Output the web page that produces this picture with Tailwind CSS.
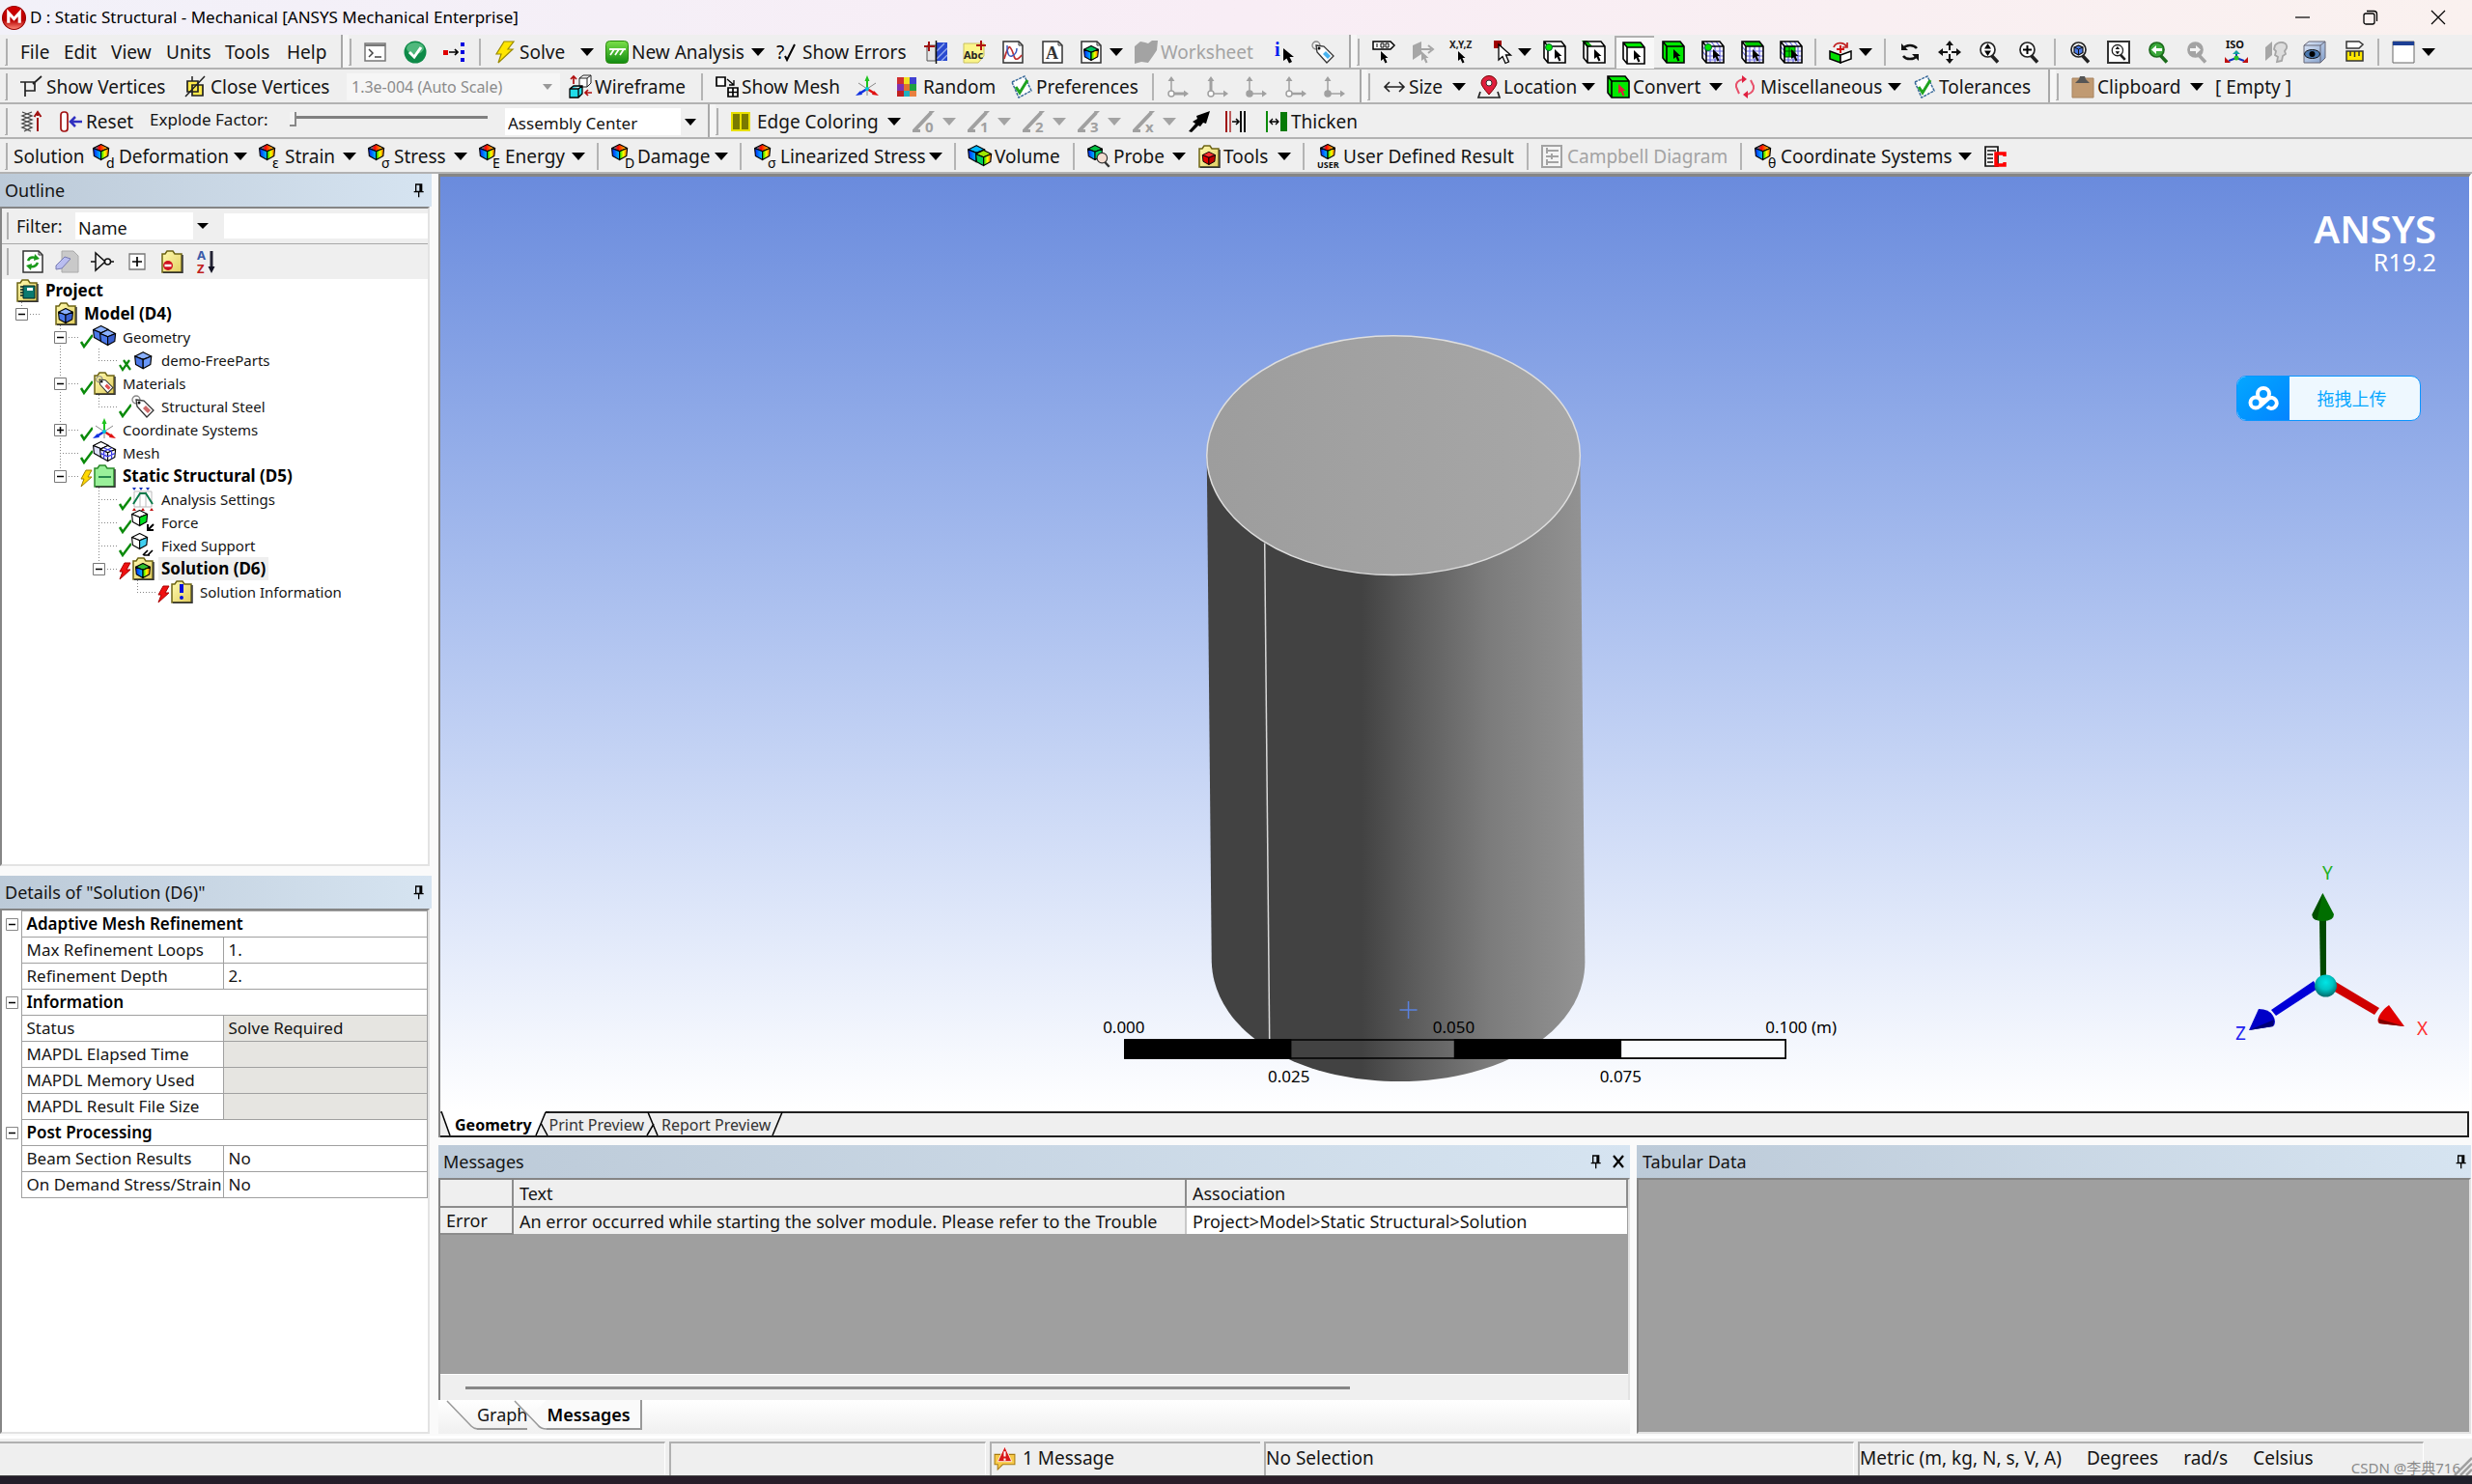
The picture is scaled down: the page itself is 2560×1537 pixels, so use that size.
<!DOCTYPE html>
<html lang="en">
<head>
  <meta charset="UTF-8" />
  <meta name="viewport" content="width=device-width, initial-scale=1.0"/>
  <title>D : Static Structural - Mechanical [ANSYS Mechanical Enterprise]</title>
  <script src="https://cdn.jsdelivr.net/npm/@tailwindcss/browser@4"></script>
</head>
<body class="h-screen flex flex-col overflow-hidden bg-[#fafafa] text-[#141414] text-[18px] leading-6 font-['Noto_Sans','Noto_Sans_CJK_SC',sans-serif]">

  <!-- shared gradients -->
  <svg class="absolute w-0 h-0" aria-hidden="true">
    <defs>
      <linearGradient id="gTop" x1="0" x2="1"><stop offset="0" stop-color="#00d0ff"/><stop offset=".4" stop-color="#f00"/><stop offset="1" stop-color="#ff0"/></linearGradient>
      <linearGradient id="gLeft" x1="0" x2="1"><stop offset="0" stop-color="#0020ff"/><stop offset="1" stop-color="#00c8ff"/></linearGradient>
      <linearGradient id="gRight" x1="0" x2="1"><stop offset="0" stop-color="#00e000"/><stop offset=".5" stop-color="#ff0"/><stop offset="1" stop-color="#ff5a00"/></linearGradient>
      <linearGradient id="gGreen" x1="0" y1="0" x2="0" y2="1"><stop offset="0" stop-color="#7be04a"/><stop offset="1" stop-color="#118a11"/></linearGradient>
      <linearGradient id="gRed" x1="0" y1="0" x2="0" y2="1"><stop offset="0" stop-color="#d40000"/><stop offset=".6" stop-color="#b80000"/><stop offset="1" stop-color="#ff8a7a"/></linearGradient>
      <linearGradient id="gFolder" x1="0" y1="0" x2="1" y2="1"><stop offset="0" stop-color="#fffbb0"/><stop offset="1" stop-color="#e2cd60"/></linearGradient>
      <linearGradient id="gTag" x1="0" y1="0" x2="1" y2="1"><stop offset="0" stop-color="#dfe9fa"/><stop offset="1" stop-color="#7f9cc8"/></linearGradient>
    </defs>
  </svg>

  <header class="h-9 shrink-0 flex items-center bg-linear-to-r from-[#f2f1f9] via-[#f8edf5] to-[#faf1ef] text-black text-[17px]">
    <svg class="w-[25px] h-[25px] ml-[2px] mr-[4px] shrink-0" viewBox="0 0 24 24"><circle cx="12" cy="12" r="11.500" fill="url(#gRed)" stroke="#900"/><path d="M6.500 17V7l5.500 6 5.500-6v10" fill="none" stroke="#fff" stroke-width="3"/></svg>
    <h1 class="grow whitespace-nowrap">D : Static Structural - Mechanical [ANSYS Mechanical Enterprise]</h1>
    <div class="flex">
      <button aria-label="Minimize" class="w-[70px] flex justify-center"><svg class="w-4 h-4" viewBox="0 0 16 16"><path d="M0 8h15" stroke="#000" stroke-width="1.200"/></svg></button>
      <button aria-label="Restore" class="w-[70px] flex justify-center"><svg class="w-4 h-4" viewBox="0 0 16 16" fill="none" stroke="#000" stroke-width="1.300"><rect x="1" y="4" width="11" height="11" rx="2"/><path d="M4 1.500h7.500q3 0 3 3V12"/></svg></button>
      <button aria-label="Close" class="w-[70px] flex justify-center"><svg class="w-4 h-4" viewBox="0 0 16 16"><path d="M1 1l14 14M15 1L1 15" stroke="#000" stroke-width="1.200"/></svg></button>
    </div>
  </header>

  <div id="toolbars" class="shrink-0 bg-[#efefef] text-[19px]"></div>

  <main class="grow min-h-0 flex gap-[7px] pr-px">
    <!-- left column -->
    <div class="w-[447px] shrink-0 flex flex-col">
      <section class="grow min-h-0 flex flex-col">
        <div class="h-[34px] shrink-0 px-[5px] flex items-center justify-between bg-linear-to-r from-[#bccad8] to-[#d6e4f1]">
          <h2>Outline</h2><span data-icon="pin"></span>
        </div>
        <div class="grow min-h-0 flex flex-col mr-[2px] border-2 border-[#858585] border-r-[#e3e3e3] border-b-[#e3e3e3] bg-white">
          <div class="h-[37px] shrink-0 flex items-center bg-[#efefef] border-b border-[#a8a8a8]">
            <span class="ml-[5px] w-[2px] h-7 shrink-0 border-r-2 border-[#b0b0b0]"></span>
            <label for="filterBy" class="ml-2 w-[61px] shrink-0">Filter:</label>
            <div class="relative w-[142px] shrink-0">
              <select id="filterBy" class="appearance-none w-full h-7 pl-[3px] pt-1 leading-6 bg-white"><option>Name</option></select>
              <span class="absolute right-0 top-0 w-5 h-7 bg-[#efefef] flex items-center justify-center pointer-events-none"><svg class="w-3 h-[6px]" viewBox="0 0 12 6"><path d="M0 0h12L6 6z"/></svg></span>
            </div>
            <input aria-label="Filter text" class="ml-3 grow min-w-0 h-[26px] bg-white" />
          </div>
          <div id="outlineTools" class="h-[36px] shrink-0 flex items-center bg-[#efefef]"></div>
          <ul id="tree" class="text-[15px]"></ul>
        </div>
      </section>

      <section class="h-[580px] shrink-0 flex flex-col mt-[10px] pb-[2px]">
        <div class="h-[34px] shrink-0 px-[5px] flex items-center justify-between bg-linear-to-r from-[#bccad8] to-[#d6e4f1]">
          <h2>Details of "Solution (D6)"</h2><span data-icon="pin"></span>
        </div>
        <div class="grow mr-[2px] border-2 border-[#858585] border-r-[#e3e3e3] border-b-[#e3e3e3] bg-white text-[17px]">
          <table class="w-full border-collapse table-fixed">
            <colgroup><col class="w-[20px]"/><col class="w-[209px]"/><col/></colgroup>
            <tbody id="details"></tbody>
          </table>
        </div>
      </section>
    </div>

    <!-- right column -->
    <div class="grow min-w-0 flex flex-col">
      <section class="grow min-h-0 flex flex-col border-2 border-t-3 border-[#858585] border-r-white border-b-0">
        <div class="relative grow min-h-0 bg-linear-to-b from-[#6a8bdd] to-white">
          <svg id="scene" class="w-full h-full" viewBox="0 0 2100 969" font-size="17">
            <defs>
              <linearGradient id="side" x1="0" x2="1"><stop offset="0" stop-color="#424242"/><stop offset=".41" stop-color="#424242"/><stop offset=".55" stop-color="#5c5c5c"/><stop offset=".75" stop-color="#7c7c7c"/><stop offset="1" stop-color="#939393"/></linearGradient>
              <linearGradient id="cap" x1="0" x2="1"><stop offset="0" stop-color="#9d9d9d"/><stop offset="1" stop-color="#a7a7a7"/></linearGradient>
              <radialGradient id="ball" cx=".5" cy=".35" r=".65"><stop offset="0" stop-color="#00e6e6"/><stop offset=".5" stop-color="#00c4c4"/><stop offset="1" stop-color="#006c6c"/></radialGradient>
            </defs>
            <!-- cylinder -->
            <path d="M793 292L798 814C800 886 885 938 992 938S1185 886 1185 814L1180 288z" fill="url(#side)"/>
            <ellipse cx="986.500" cy="289" rx="193.500" ry="124" fill="url(#cap)" stroke="#dedede" stroke-width="1.500"/>
            <path d="M853 380l5 515" stroke="#d8d8d8" stroke-width="1.500"/>
            <path d="M1002 855v18M993 864h18" stroke="#5a82e0" stroke-width="1.500"/>
            <!-- ruler -->
            <g stroke="#000" stroke-width="1.500">
              <path d="M708 895h685v19H708z" fill="none"/>
              <path d="M708 895h172v19H708zM1050 895h172v19h-172z"/>
              <path d="M1222 895h171v19h-171z" fill="#fff" fill-opacity=".5"/>
            </g>
            <g text-anchor="middle">
              <text x="707" y="888">0.000</text><text x="1049" y="888">0.050</text><text x="1409" y="888">0.100 (m)</text>
              <text x="878" y="939">0.025</text><text x="1222" y="939">0.075</text>
            </g>
          </svg>

          <div class="absolute right-[34px] top-[32px] text-right text-white">
            <p class="text-[40px] leading-[44px] font-semibold">ANSYS</p>
            <p class="text-[25px] leading-[24px]">R19.2</p>
          </div>

          <button class="absolute right-[50px] top-[206px] w-[191px] h-[47px] flex items-center rounded-[10px] overflow-hidden border border-[#0a95ff] bg-[#eef8ff] text-[#06a7ff]">
            <span class="w-[54px] h-full flex items-center justify-center bg-linear-to-br from-[#06a7ff] to-[#0684ff]">
              <svg class="w-8 h-7" viewBox="0 0 32 28" fill="none" stroke="#fff" stroke-width="4"><circle cx="8" cy="18" r="5.500"/><circle cx="16" cy="9" r="6"/><path d="M12 22l9-8a5.500 5.500 0 1 1 -1 8"/></svg>
            </span>
            <span class="grow text-center pr-[6px]">拖拽上传</span>
          </button>

          <svg class="absolute right-[27px] bottom-[52px] w-[230px] h-[210px]" viewBox="2300 890 230 210" font-size="19" stroke-width="1">
            <text x="2405" y="912" fill="#22b022">Y</text><text x="2315" y="1078" fill="#2222f0">Z</text><text x="2503" y="1073" fill="#ff3030">X</text>
            <path d="M2402 954h7v62h-6z" fill="#004a00"/><path d="M2405.500 926l11.500 22q0 7-11.500 7t-11-7z" fill="#006e00"/><path d="M2405.500 926l-11 22q0 5 5 6z" fill="#005000"/>
            <path d="M2419 1018l45 27-5 7-43-25z" fill="#cf0000"/><path d="M2474 1042l16 22-26-3q-3-2 0-8t10-11z" fill="#e00000"/><path d="M2490 1064l-26-3-1-5z" fill="#800000"/>
            <path d="M2396 1017l-44 30 5 6 43-28z" fill="#0000d8"/><path d="M2339 1046l-10 22 25-4q4-4 0-11t-15-7z" fill="#0000c8"/><path d="M2329 1068l25-4 1-7z" fill="#000078"/>
            <circle cx="2408.500" cy="1022" r="11.500" fill="url(#ball)"/>
          </svg>
        </div>

        <div class="h-[27px] shrink-0 flex items-stretch bg-[#efefef] border-y-2 border-r-2 border-[#202020] text-[16px] leading-5">
          <svg class="w-[12px] -mt-[2px] h-[25px] shrink-0" viewBox="0 0 12 25"><path d="M0 0h12v25h-2z" fill="#fff"/><path d="M1 0l9 25" stroke="#000" stroke-width="1.500"/></svg>
          <button class="-mt-[2px] h-[25px] pt-[2px] pl-[3px] pr-px bg-white text-black font-bold text-[16px]">Geometry</button>
          <svg class="w-[17px] -mt-[2px] h-[25px] shrink-0" viewBox="0 0 17 25"><path d="M0 0h13L4 25H0z" fill="#fff"/><path d="M13 1L3 25M8 12l7 13M13 1h4" stroke="#000" stroke-width="1.500" fill="none"/></svg>
          <button class="text-[#333]">Print Preview</button>
          <svg class="w-[18px] -mt-[2px] h-[25px] shrink-0" viewBox="0 0 18 25"><path d="M4 1l10 24M10 13L3 25" stroke="#000" stroke-width="1.500"/></svg>
          <button class="text-[#333]">Report Preview</button>
          <svg class="w-[14px] -mt-[2px] h-[25px] shrink-0" viewBox="0 0 14 25"><path d="M12 1L2 25" stroke="#000" stroke-width="1.500"/></svg>
        </div>
      </section>

      <div class="h-[301px] shrink-0 mt-2 pb-[2px] grid grid-cols-[1234fr_864fr] gap-[7px]">
        <section class="min-w-0 flex flex-col">
          <div class="h-[34px] shrink-0 px-[5px] flex items-center bg-linear-to-r from-[#bccad8] to-[#d6e4f1]">
            <h2 class="grow">Messages</h2><span data-icon="pin"></span>
            <button aria-label="Close messages" class="ml-2"><svg class="w-[14px] h-[14px]" viewBox="0 0 14 14"><path d="M2 1l10 12M12 1L2 13" stroke="#000" stroke-width="2.200"/></svg></button>
          </div>
          <div class="grow flex flex-col border-t-2 border-l-2 border-[#858585] border-r-2 border-r-[#e3e3e3] bg-[#9f9f9f]">
            <table class="w-full table-fixed border-collapse text-left">
              <colgroup><col class="w-[75px]"/><col class="w-[697px]"/><col/></colgroup>
              <thead class="bg-[#efefef]">
                <tr class="h-7">
                  <th aria-label="Type" class="border-r-2 border-b-2 border-[#8c8c8c]"></th>
                  <th class="border-r-2 border-b-2 border-[#8c8c8c] pl-[6px] font-normal">Text</th>
                  <th class="border-r-2 border-b-2 border-[#8c8c8c] pl-[6px] font-normal">Association</th>
                </tr>
              </thead>
              <tbody>
                <tr class="h-7 bg-[#efefef]">
                  <td class="border-r-2 border-b-2 border-[#8c8c8c] pl-[6px]">Error</td>
                  <td class="border-r-2 border-[#c8c8c8] pl-[6px] whitespace-nowrap">An error occurred while starting the solver module. Please refer to the Trouble</td>
                  <td class="bg-white pl-[6px] whitespace-nowrap">Project&gt;Model&gt;Static Structural&gt;Solution</td>
                </tr>
              </tbody>
            </table>
            <div class="mt-auto h-[27px] bg-[#efefef] border-t border-white flex items-center"><span class="ml-[26px] w-[74.5%] h-[3px] bg-[#868686]"></span></div>
          </div>
          <div class="h-[35px] shrink-0 pl-2 flex bg-linear-to-b from-white to-[#f0f0f0]">
            <svg class="w-[32px] h-[31px]" viewBox="0 0 32 31"><path d="M1 1l25 26q3 3 8 3" fill="none" stroke="#999" stroke-width="1.500"/></svg>
            <button class="h-[31px] border-b-2 border-[#999]">Graph</button>
            <svg class="w-[34px] -ml-[14px] h-[31px]" viewBox="0 0 34 31"><path d="M16 17l9 9q3 4 9 4V0z" fill="#fafafa"/><path d="M1 1l24 25q3 4 9 4" fill="none" stroke="#999" stroke-width="1.500"/></svg>
            <button class="h-[31px] pr-[10px] border-b-2 border-r-2 border-[#999] bg-[#fafafa] text-black font-semibold">Messages</button>
          </div>
        </section>
        <section class="min-w-0 flex flex-col">
          <div class="h-[34px] shrink-0 pl-[6px] pr-[2px] flex items-center justify-between bg-linear-to-r from-[#bccad8] to-[#d6e4f1]">
            <h2>Tabular Data</h2><span data-icon="pin"></span>
          </div>
          <div class="grow border-2 border-[#858585] border-r-[#e3e3e3] border-b-[#e3e3e3] bg-[#9f9f9f]"></div>
        </section>
      </div>
    </div>
  </main>

  <footer class="relative h-[41px] shrink-0 pt-[3px] flex gap-1 bg-[#efefef] border-t-3 border-white text-[19px]">
    <div class="w-[689px] border-t-2 border-r border-t-[#b0b0b0] border-r-white"></div>
    <div class="w-[328px] border-t-2 border-l-2 border-r border-[#b0b0b0] border-r-white"></div>
    <div class="w-[280px] pl-px pb-1 flex items-center gap-[6px] border-t-2 border-l-2 border-[#b0b0b0]"><span data-icon="alert"></span>1 Message</div>
    <div class="grow pb-1 flex items-center border-t-2 border-l-2 border-r border-[#b0b0b0] border-r-white">No Selection</div>
    <div class="w-[586px] pb-1 flex items-center gap-[26px] border-t-2 border-l-2 border-r border-[#b0b0b0] border-r-white"><span>Metric (m, kg, N, s, V, A)</span><span>Degrees</span><span>rad/s</span><span>Celsius</span></div>
    <div class="w-[46px]"></div>
    <span class="absolute right-[12px] bottom-0 text-[15px] leading-4 text-[#8a8a8a]">CSDN @李典716</span>
    <svg class="absolute right-0 bottom-0 w-5 h-5" viewBox="0 0 20 20"><path d="M2 20L20 2M8 20L20 8M14 20l6-6" stroke="#a0a0a0" stroke-width="2.500"/></svg>
  </footer>
  <div class="h-[9px] shrink-0 bg-linear-to-r from-[#231d29] via-[#2b1d28] to-[#1f1f2a] border-t border-[#444]"></div>

  <script>
    // ---- icon building blocks (24 x 24) ----
    const cursor = (f = '#000') => `<path d="M12 9v10l2.500-2 2 4.500 2-1-2-4.500h3z" fill="${f}"/>`;
    const box = (f, extra = '') => `<path d="M1 1h18l4 5v17H5l-4-5z" fill="${f}"/>${extra}<path d="M1 1h18l4 5v17H5l-4-5zM1 1l4 5h18M5 6v17" fill="none" stroke="#000" stroke-width="1.600"/>`;
    const grid = '<path d="M9 6v17M14 6v17M19 6v17M5 11h18M5 16h18M5 20h18M1 6l4 5M1 11l4 5M5 1l4 5M10 1l4 5M15 1l4 5" stroke="#6a6ae0" stroke-width="1.200"/>';
    const iso = (t, l, r) => `<g stroke="#000" stroke-width="1.400" stroke-linejoin="round"><path d="M2 7l10-5 10 5-10 4z" fill="${t}"/><path d="M2 7l10 4v11L3 17z" fill="${l}"/><path d="M22 7l-10 4v11l9-5z" fill="${r}"/></g>`;
    const rainbow = iso('url(#gTop)', 'url(#gLeft)', 'url(#gRight)');
    const result = (s) => `<g transform="translate(-1 -2) scale(.8)">${rainbow}</g><text x="14" y="24" font-size="14" fill="#000">${s}</text>`;
    const page = '<path d="M2 1h16l4 4v18H2z" fill="#fff" stroke="#333" stroke-width="1.500"/><path d="M18 1v4h4" fill="none" stroke="#333"/>';
    const folder = (f = 'url(#gFolder)', s = '#6d6414') => `<path d="M2 23V4h3l2-3h6l2 3h7v19z" fill="${f}" stroke="${s}" stroke-width="1.500"/><path d="M3 23.200h20V5" fill="none" stroke="#333" stroke-width="1.500"/>`;
    const lens = (inner, ring = '#222', fill = '#fff') => `<path d="M14 15l7 7.500" stroke="${ring}" stroke-width="3.500"/><circle cx="10.500" cy="9.500" r="7.500" fill="${fill}" stroke="${ring}" stroke-width="1.700"/>${inner}`;
    const triad = (a, b, dot) => `<g stroke="#a0a0a0" fill="#a0a0a0"><path d="M5 19V4" stroke-width="${a}"/><path d="M5 19h15" stroke-width="${b}"/><path d="M1.500 6L5 1l3.500 5zM18 15.500l5 3.500-5 3.500z" stroke="none"/><circle cx="5" cy="19" r="3" fill="${dot}" stroke-width="1.500"/></g>`;
    const edge = (n) => `<path d="M2 21L19 3" stroke="#a0a0a0" stroke-width="4"/><path d="M17 1h6l-4 4zM0 20h8v3H0z" fill="#a0a0a0"/><text x="13" y="23" font-size="15" font-weight="700" fill="#a0a0a0">${n}</text>`;
    const tag = (f) => `<circle cx="5" cy="5" r="4" fill="none" stroke="#888" stroke-width="1.300"/><path d="M5 5l8 1 10 10-7 7L6 12z" fill="#fff" stroke="#333" stroke-width="1.300"/><path d="M12 14l3-3 5 5-3 3z" fill="${f}"/><circle cx="8" cy="8" r="1.500"/>`;
    const card = '<path d="M2 7l13-6 7 15-13 7z" fill="#fff" stroke="#3a6a9a" stroke-width="1.500" stroke-dasharray="3 1"/><path d="M6 12l4 6 8-13" fill="none" stroke="#1fa31f" stroke-width="3"/>';
    const axes = '<path d="M12 14V4" stroke="#1fc41f" stroke-width="2"/><path d="M9.500 6L12 0l2.500 6z" fill="#1fc41f"/><path d="M12 14l-8 5" stroke="#1030e0" stroke-width="2.500"/><path d="M0 21l5-5 2 4z" fill="#1030e0"/><path d="M12 14l8 5" stroke="#e01010" stroke-width="2.500"/><path d="M24 21l-5-5-2 4z" fill="#e01010"/><path d="M12 14v7M3 8l9 6 9-6" stroke="#888" fill="none"/><circle cx="12" cy="14" r="2" fill="#00c8d8"/>';
    const bolt = (f, s) => `<path d="M11 1h10l-6 8h5L5 23l3-9H3z" fill="${f}" stroke="${s}" stroke-width="1.200"/>`;

    const icons = {
      pin: '<path d="M7 3h9v11H7zM4 14.500h15M11.500 15v8" fill="none" stroke="#000" stroke-width="2"/><path d="M14 3v11" stroke="#000" stroke-width="3"/>',
      alert: '<path d="M2 9h20v10H10l-5 5v-5H2z" fill="#f7c948" stroke="#a87b10"/><path d="M12 1l7 15H5z" fill="#d81818" stroke="#fff" stroke-width=".8"/><path d="M12 6v5M12 13v2" stroke="#fff" stroke-width="2"/>',
      console: '<rect x="1" y="3" width="21" height="18" fill="#fff" stroke="#777" stroke-width="1.500"/><path d="M1 5h21" stroke="#777" stroke-width="2"/><path d="M5 9l4 4-4 4M11 17h7" fill="none" stroke="#444" stroke-width="1.500"/>',
      ok: '<circle cx="12" cy="12" r="11.500" fill="#0e8a48"/><ellipse cx="12" cy="8" rx="9" ry="6" fill="#4fb87c"/><path d="M6 12l5 5 7-10" fill="none" stroke="#fff" stroke-width="3"/>',
      dots: '<path d="M0 10h5v5H0z" fill="#e00000"/><path d="M6 12h9M12 9l3 3-3 3" fill="none" stroke="#000" stroke-width="1.700"/><path d="M18 2h4v4h-4zM18 10h4v4h-4zM18 18h4v4h-4z" fill="#0000e0"/>',
      solve: bolt('#ffe600', '#9a8a00'),
      analysis: '<rect x=".5" y=".5" width="23" height="23" rx="4" fill="url(#gGreen)" stroke="#2a8a10"/><path d="M4 9h17" stroke="#fff" stroke-width="2"/><path d="M9 9l-4 6M14 9l-4 6M19 9l-4 6" stroke="#fff" stroke-width="1.700"/>',
      errors: '<text x="0" y="19" font-size="19" fill="#000">?</text><path d="M9 16l2 4L19 4" fill="none" stroke="#000" stroke-width="2"/>',
      section: '<path d="M12 2h12v19H12z" fill="#2a4ad0"/><path d="M13 11l8-8M13 19L24 8M18 21l6-6" stroke="#9ab0f0" stroke-width="1.300"/><path d="M3 5h9v16H3z" fill="#e4e4e4" stroke="#555"/><path d="M12.500 0v24" stroke="#111" stroke-width="1.500"/><path d="M5 1v10M0 6h11" stroke="#a01010" stroke-width="2"/>',
      abc: '<path d="M1 3h21v13l-6 7H1z" fill="#fbf58a" stroke="#c8c060"/><text x="1" y="19" font-size="11" font-weight="700" fill="#222">Abc</text><path d="M19 0v10M14 5h10" stroke="#b01010" stroke-width="2"/>',
      chart: page + '<path d="M3 19q4-14 6-12t4 9 8-1" fill="none" stroke="#c03030" stroke-width="1.700"/><path d="M6 5q0 13 5 11t5-8" fill="none" stroke="#3a5ac0" stroke-width="1.500"/>',
      letter: page + '<text x="5" y="19" font-size="18" font-weight="700" font-family="Liberation Serif" fill="#333">A</text>',
      pic: page + `<g transform="translate(3 4) scale(.75)">${iso('#00c060', 'url(#gLeft)', 'url(#gRight)')}</g>`,
      sheet: '<path d="M0 6l6-5 5 1 3 1 4-3h6l-1 10-4 6-5 7-7-1-7 2z" fill="#a3a3a3"/>',
      info: '<text x="2" y="16" font-size="20" font-weight="700" font-family="Liberation Serif" fill="#0020f0">i</text><path d="M11 8v13l3.500-2.500 2.500 5 3-1.500-2.500-5h4.500z"/>',
      tag: tag('#4ab4f0'),
      steel: tag('#d06a6a'),
      label100: '<path d="M1 1h18l4 4-4 4H1z" fill="#fff" stroke="#000" stroke-width="1.500"/><path d="M5 3v4M9 3h3v4H9zM14 3h3v4h-3z" fill="none" stroke="#000"/><g transform="translate(-3 2)">' + cursor() + '</g>',
      flip: '<path d="M2 5l9-4v13l-9 6z" fill="#a6a6a6"/><path d="M4 9h17M18 5l5 4-5 4" stroke="#a6a6a6" stroke-width="2" fill="none"/><g transform="translate(-1 2)">' + cursor('#a6a6a6') + '</g>',
      xyz: '<text x="0" y="8" font-size="10" font-weight="700" fill="#222">X,Y,Z</text><g transform="translate(-3 2)">' + cursor() + '</g>',
      select: '<path d="M1 0h8v8H1z" fill="#a00000"/><path d="M6 4v16l4-3.500 3 7 3.500-1.500-3-7h5z" fill="#fff" stroke="#000" stroke-width="1.300"/>',
      vertex: box('#fff', '') + '<circle cx="6" cy="7" r="3.500" fill="#00e800" stroke="#063"/>' + cursor(),
      edge: box('#fff', '<path d="M1 1l4 5 3-1-4-4z" fill="#00e800" stroke="#0a0" stroke-width="2"/>') + cursor(),
      face: box('#fff', '<path d="M1 1h18l4 5H5z" fill="#00e800"/>') + cursor(),
      body: box('#00e800') + cursor(),
      node: box('#f4f4ff', grid) + '<circle cx="7" cy="7" r="3.500" fill="#00e800" stroke="#063"/>' + cursor(),
      elface: box('#f4f4ff', grid + '<path d="M3 1h16l3 5H6z" fill="#00c800"/>') + cursor(),
      elem: box('#f4f4ff', grid + '<path d="M5 6h11v11H5z" fill="#00d800" stroke="#050"/><path d="M10 6v11M5 11h11" stroke="#050"/>') + cursor(),
      extend: '<path d="M5 7a7 6 0 0 1 13-1M19 2v5h-5" fill="none" stroke="#c02020" stroke-width="1.700"/><path d="M12 5v8M8 9h8" stroke="#d01010" stroke-width="2"/><path d="M1 11l11 4v8L1 19z" fill="#00e000" stroke="#000" stroke-width="1.500"/><path d="M23 11l-11 4v8l11-4z" fill="#fff" stroke="#000" stroke-width="1.500"/>',
      rotate: '<path d="M5 8a8 6 0 0 1 14 0M19 16a8 6 0 0 1-14 0" fill="none" stroke="#111" stroke-width="2.500"/><path d="M3 3v7h7zM21 21v-7h-7z" fill="#111"/>',
      pan: '<path d="M12 3v7M12 14v7M3 12h7M14 12h7" stroke="#111" stroke-width="2"/><path d="M8 5l4-5 4 5zM8 19l4 5 4-5zM5 8l-5 4 5 4zM19 8l5 4-5 4z" fill="#111"/>',
      zoom: lens('<path d="M7 8.500L10.500 3 14 8.500zM7 10.500l3.500 5.500 3.500-5.500z"/>'),
      zoomin: lens('<path d="M10.500 5v9M6 9.500h9" stroke="#000" stroke-width="2"/>'),
      fit: lens('<path d="M6 7l4.500-2L15 7v5.500l-4.500 2.500L6 12.500z" fill="#4a7ae8" stroke="#111" stroke-width="1.200"/><path d="M6 7l4.500 2L15 7M10.500 9v6" fill="none" stroke="#111"/>'),
      zoombox: '<rect x="1" y="1" width="22" height="22" fill="#fff" stroke="#333" stroke-width="2"/><g transform="translate(3 3) scale(.75)">' + lens('<path d="M7.500 8l3-4 3 4zM7.500 11l3 4 3-4z"/>') + '</g>',
      prev: lens('<path d="M5 9.500l5-4.500v3h6v3h-6v3z" fill="#fff"/>', '#1a6a1a', '#3aa83a'),
      next: lens('<path d="M16 9.500L11 5v3H5v3h6v3z" fill="#f4f4f4"/>', '#a3a3a3', '#a3a3a3'),
      isoview: '<text x="1" y="8" font-size="11" font-weight="700" fill="#111">ISO</text><path d="M12 11v7l-8 3M12 18l8 3" stroke="#1030c0" stroke-width="2" fill="none"/><path d="M0 17v6h6zM24 17v6h-6z" fill="#c01010"/><path d="M8 14h8l-4-4z" fill="#11a0a0"/><circle cx="12" cy="18" r="2.500" fill="#2ac02a"/>',
      lookat: '<path d="M1 7l7-6v14l-7 6z" fill="#a6a6a6"/><path d="M11 5q3-4 8-3t4 6l-2 3 1 3-3 2-1 5-5 1 1-5-3-2 1-4-2-2z" fill="#ddd" stroke="#a6a6a6" stroke-width="1.800"/>',
      eye: '<path d="M1 5l5-4h17v17l-5 5H1z" fill="url(#gTag)" stroke="#667"/><path d="M1 5h17v18M18 5l5-4" fill="none" stroke="#667"/><ellipse cx="9.500" cy="14" rx="8" ry="4.500" fill="#4a78b0" stroke="#111"/><circle cx="9.500" cy="14" r="3"/>',
      ruler: '<path d="M4 1h13l4 3-4 4H4z" fill="#fff" stroke="#333" stroke-width="1.500"/><path d="M4 11h17v10H4z" fill="#ffe800" stroke="#333" stroke-width="1.500"/><path d="M8 11v5M12.500 11v6M17 11v5" stroke="#333" stroke-width="1.500"/>',
      windowbtn: '<path d="M1 1h22v22H1z" fill="#fff" stroke="#666"/><path d="M1 1h22v4H1z" fill="#1c3f94"/>',
      showv: '<path d="M5 7h10v9H5zM5 16v6M13 9L22 1M5 7H0" fill="none" stroke="#222" stroke-width="1.700"/>',
      closev: '<path d="M3 6h11v11H3zM8 10h11v11H8z" fill="#ffe94a" stroke="#222" stroke-width="1.700"/><path d="M1 22L21 1M8 6V1" stroke="#222" stroke-width="1.500"/>',
      wire: '<path d="M11 3l4-3h8v8l-4 4h-8zM11 3h8l4-3M19 3v9" fill="#fff" stroke="#222"/><path d="M1 14l4-3h9v8l-4 4H1zM1 14h9l4-3M10 14v9" fill="#20dce8" stroke="#000" stroke-width="1.300"/><path d="M5 1v8M2 4l3-3 3 3M17 18h7M20 15l-3 3 3 3" stroke="#b01010" stroke-width="1.700" fill="none"/>',
      mesh: '<path d="M1 2h9v9H1zM13 13h10v9H13zM18 13v9M13 17.500h10" fill="#fff" stroke="#000" stroke-width="1.700"/><path d="M12 4l7 6M19 5v5h-5" stroke="#000" stroke-width="1.300" fill="none"/>',
      axes,
      random: '<path d="M0 2h7v7H0z" fill="#d03030"/><path d="M7 2h6v7H7z" fill="#f0e020"/><path d="M13 2h7v7h-7z" fill="#4040d0"/><path d="M0 9h7v7H0z" fill="#8030b0"/><path d="M7 9h6v7H7z" fill="#e07030"/><path d="M13 9h7v7h-7z" fill="#20a040"/><path d="M0 16h7v6H0z" fill="#c02020"/><path d="M7 16h6v6H7z" fill="#20b0c0"/><path d="M13 16h7v6h-7z" fill="#e88040"/>',
      prefs: card,
      t1: triad(1.5, 3, '#fff'), t2: triad(3, 1.5, '#fff'), t3: triad(1.5, 1.5, '#a0a0a0'), t4: triad(1.5, 2.5, '#fff'), t5: triad(1.5, 1.5, '#a0a0a0'),
      size: '<path d="M2 12h20M7 7l-5 5 5 5M17 7l5 5-5 5" fill="none" stroke="#222" stroke-width="1.600"/>',
      location: '<path d="M3 17l-2 6h22l-2-6" fill="none" stroke="#222" stroke-width="1.700"/><path d="M12 20Q4 11 4 8a8 7.500 0 0 1 16 0q0 3-8 12z" fill="#e01e3c" stroke="#700" /><circle cx="12" cy="8" r="3" fill="#fff" stroke="#333"/>',
      convert: box('#00e800') + cursor('#e01e3c'),
      misc: '<path d="M9 4Q1 6 2 12l3 7M13 20q8-2 7-9l-3-6" fill="none" stroke="#e8506a" stroke-width="2"/><path d="M8 0l5 4-5 4zM14 24l-5-4 5-4z" fill="#e02040"/>',
      clip: '<path d="M1 3h22v20H1z" fill="#c09a72" stroke="#a88460"/><path d="M4 8l4-4 1-3h5l1 3 4 4z" fill="#555"/>',
      explode: '<path d="M2 2l10 4-10 4 10 4-10 4 9 4M12 2L2 6l10 4-10 4 10 4-8 4" fill="none" stroke="#444" stroke-width="1.300"/><path d="M18 22V4M14.500 7L18 2l3.500 5" fill="none" stroke="#a01010" stroke-width="2" stroke-dasharray="14 2"/>',
      reset: '<rect x="1" y="2" width="7" height="20" rx="3" fill="#fff" stroke="#a01010" stroke-width="1.700"/><path d="M11 12h12M16 7l-5 5 5 5" fill="none" stroke="#3030c0" stroke-width="2.500"/>',
      edgecol: '<path d="M0 2h20v20H0z" fill="#e8e000"/><path d="M2 4h7v16H2zM11 4h7v16h-7z" fill="#7a7a00"/>',
      e0: edge('0'), e1: edge('1'), e2: edge('2'), e3: edge('3'), ex: edge('x'),
      arrow: '<path d="M23 1l-4 13-3-1-3 4-2-1-7 7-3-1 7-8-3-2 5-3-1-3z"/>',
      gap: '<path d="M2 1v22" stroke="#a01010" stroke-width="2"/><path d="M6 1v22" stroke="#a01010" stroke-width="1.300"/><path d="M8 12h7M12 9l3 3-3 3" stroke="#000" stroke-width="1.500" fill="none"/><path d="M17 1v22M21 1v22" stroke="#111" stroke-width="2"/>',
      thick: '<path d="M2 1v22" stroke="#0a8a0a" stroke-width="2"/><path d="M5 12h9M8 9l-3 3 3 3M11 9l3 3-3 3" stroke="#000" stroke-width="1.300" fill="none"/><path d="M16 2h7v20h-7z" fill="#067a06"/>',
      rd: result('d'), re: result('ε'), rs: result('σ'), rE: result('E'), rD: result('D'), rt: result('θ'),
      volume: '<g transform="translate(-2 -1) scale(.85)">' + iso('#00b8ff', 'url(#gLeft)', '#00d0a0') + '</g><g transform="translate(6 4) scale(.8)">' + iso('#a0e800', '#00d060', 'url(#gRight)') + '</g>',
      probe: '<g transform="translate(-1 -1) scale(.75)">' + iso('#00c040', 'url(#gLeft)', '#00d060') + '</g><g transform="translate(8 7) scale(.7)">' + lens('', '#333', '#f4dcd0') + '</g>',
      tools: folder() + '<g transform="translate(4 6) scale(.66)">' + iso('#ff3030', '#e00000', '#c00000') + '</g>',
      user: '<g transform="translate(2 -2) scale(.75)">' + rainbow + '</g><text x="0" y="24" font-size="9" font-weight="700" fill="#111">USER</text>',
      campbell: '<path d="M1 1h20v22H1z" fill="#f4f4f4" stroke="#a3a3a3" stroke-width="2"/><path d="M5 6h13M5 12h13M5 18h13M6 3v6M11 9v6M6 15v6" stroke="#a3a3a3" stroke-width="2"/>',
      last: '<path d="M2 2h13v20H2z" fill="#fff" stroke="#111" stroke-width="1.700"/><path d="M4 6h9M4 10h6M4 14h6M4 18h6" stroke="#111" stroke-width="1.500"/><path d="M22 12V9H13v12h9v-3" fill="none" stroke="#f00" stroke-width="3.500"/>',
      refresh: page + '<path d="M7 11q2-5 8-3M17 13q-2 5-8 4" fill="none" stroke="#1a9a1a" stroke-width="2.500"/><path d="M14 4l5 5-6 2zM10 21l-5-5 6-2z" fill="#1a9a1a"/>',
      eraser: '<path d="M6 1h12l5 5v17H6z" fill="#c9c9c9" stroke="#aaa"/><path d="M0 16L9 7l6 2-9 10-6 1z" fill="#b9bdf0" stroke="#777ab0"/>',
      invert: '<path d="M0 12h5M5 3v18l10-9zM20 12h4" fill="none" stroke="#111" stroke-width="1.500"/><circle cx="17.500" cy="12" r="3" fill="#fff" stroke="#111" stroke-width="1.500"/>',
      expand: '<path d="M4 4h16v16H4z" fill="#fff" stroke="#777" stroke-width="1.300"/><path d="M12 7v10M7 12h10" stroke="#000" stroke-width="1.700"/>',
      hide: folder() + '<circle cx="8" cy="16" r="5" fill="#d01020"/><path d="M4.500 16h7" stroke="#fff" stroke-width="2.500"/>',
      sort: '<text x="2" y="10" font-size="13" font-weight="700" fill="#3a5aa8">A</text><text x="2" y="24" font-size="13" font-weight="700" fill="#c02020">Z</text><path d="M17 1v17" stroke="#223" stroke-width="3"/><path d="M13.500 17h7L17 24z" fill="#112"/>',
      project: folder() + '<path d="M8 7h12v13H8z" fill="#0a7a70" stroke="#022"/><path d="M5 8h3M5 11h3M5 14h3M5 17h3" stroke="#022" stroke-width="1.500"/><path d="M12 9h6v3h-6z" fill="#fff"/>',
      model: folder() + '<g transform="translate(3 5) scale(.75)">' + iso('#8ab0ff', '#4a78e8', '#3a60d0') + '</g>',
      geometry: '<g transform="translate(-1 -1) scale(.8)">' + iso('#8ab0ff', '#4a78e8', '#3a60d0') + '</g><g transform="translate(6 3) scale(.8)">' + iso('#8ab0ff', '#4a78e8', '#3a60d0') + '</g>',
      part: '<g transform="translate(2 2) scale(.85)">' + iso('#8ab0ff', '#4a78e8', '#6a98f8') + '</g>',
      materials: folder() + '<g transform="translate(3 4) scale(.78)">' + tag('#e05050') + '</g>',
      meshnode: '<g transform="translate(-1 -1) scale(.8)">' + iso('#fff', '#dfe0ff', '#fff') + '</g><g transform="translate(6 3) scale(.8)">' + iso('#fff', '#dfe0ff', '#fff') + '<path d="M7 5l10 4M17 5L7 9M3 12l9 4 9-4M7 9v10M17 9v10" stroke="#3a3ae8" stroke-width="1.500" fill="none"/></g>',
      statics: folder('#9af09a', '#2a8a2a') + '<path d="M6 13h13" stroke="#063" stroke-width="1.500"/>',
      settings: '<path d="M3 4h18v16H3zM9 4v16M15 4v16" fill="none" stroke="#bbb"/><path d="M2 17l7-11h6l7 11" fill="none" stroke="#0a7a4a" stroke-width="2"/><path d="M1 0h4l-2 3zM8 0h4l-2 3zM15 0h4l-2 3z" fill="#1030c0"/><path d="M1 24h4l-2-3zM10 24h4l-2-3zM19 24h4l-2-3z" fill="#c01010"/>',
      force: '<g transform="translate(-1 -2) scale(.8)">' + iso('#fff', '#fff', '#00e020') + '</g><path d="M23 14l-5 5M17 14v6h6" stroke="#000" stroke-width="2" fill="none"/>',
      fixed: '<g transform="translate(-1 -2) scale(.8)">' + iso('#fff', '#fff', '#40d0f0') + '</g><path d="M12 22l5-5M17 22l5-5M13 22h6" stroke="#000" stroke-width="1.700"/>',
      solution: folder() + '<g transform="translate(3 5) scale(.75)">' + iso('#30c030', 'url(#gLeft)', 'url(#gRight)') + '</g>',
      solinfo: folder() + '<path d="M12 4v9" stroke="#0010e0" stroke-width="4"/><circle cx="12" cy="18" r="2" fill="#0010e0"/>'
    };
    const svg = (name, cls = 'w-6 h-6') => `<svg class="${cls} shrink-0 overflow-visible" viewBox="0 0 24 24" aria-hidden="true">${icons[name]}</svg>`;
    const caret = (f = '#000') => `<svg class="w-[14px] h-[8px] shrink-0" viewBox="0 0 14 8" aria-hidden="true"><path d="M0 0h14L7 8z" fill="${f}"/></svg>`;

    // toolbar entries: [icon, label, width, flags]; flags: c = caret, d = disabled, p = pressed
    // '|' is a separator, '#' ends one band and starts the next
    const bars = [
      [['', 'File', 'w-[45px]'], ['', 'Edit', 'w-[49px]'], ['', 'View', 'w-[57px]'], ['', 'Units', 'w-[61px]'], ['', 'Tools', 'w-[64px]'], ['', 'Help', 'w-[56px]'], '#',
       ['console', '', 'w-[41px]'], ['ok', '', 'w-[41px]'], ['dots', '', 'w-[37px]'], '|',
       ['solve', 'Solve', 'w-[104px]', 'c'], ['analysis', 'New Analysis', 'w-[165px]', 'c'], ['errors', 'Show Errors', 'w-[153px]'],
       ['section', '', 'w-[40px]'], ['abc', '', 'w-[40px]'], ['chart', '', 'w-[41px]'], ['letter', '', 'w-[40px]'], ['pic', '', 'w-[45px]', 'c'], ['sheet', 'Worksheet', 'w-[143px]', 'd'], ['info', '', 'w-[40px]'], ['tag', '', 'w-[39px]'], '#',
       ['label100', '', 'w-[40px]'], ['flip', '', 'w-[40px]'], ['xyz', '', 'w-[45px]'], ['select', '', 'w-[40px]', 'c'],
       ['vertex', '', 'w-[41px]'], ['edge', '', 'w-[41px]'], ['face', '', 'w-[41px]', 'p'], ['body', '', 'w-[41px]'], ['node', '', 'w-[41px]'], ['elface', '', 'w-[40px]'], ['elem', '', 'w-[36px]'], '|',
       ['extend', '', 'w-[45px]', 'c'], '|', ['rotate', '', 'w-[41px]'], ['pan', '', 'w-[41px]'], ['zoom', '', 'w-[41px]'], ['zoomin', '', 'w-[38px]'], '|',
       ['fit', '', 'w-[40px]'], ['zoombox', '', 'w-[41px]'], ['prev', '', 'w-[40px]'], ['next', '', 'w-[41px]'], ['isoview', '', 'w-[41px]'], ['lookat', '', 'w-[40px]'], ['eye', '', 'w-[41px]'], ['ruler', '', 'w-[36px]'], '|',
       ['windowbtn', '', 'w-[45px]', 'c']],
      [['showv', 'Show Vertices', 'w-[170px]'], ['closev', 'Close Vertices', 'w-[168px]'], 'scale',
       ['wire', 'Wireframe', 'w-[137px]'], '|', ['mesh', 'Show Mesh', 'w-[145px]'], ['axes', '', 'w-[43px]'], ['random', 'Random', 'w-[117px]'], ['prefs', 'Preferences', 'w-[147px]'], '|',
       ['t1', '', 'w-[41px]'], ['t2', '', 'w-[40px]'], ['t3', '', 'w-[41px]'], ['t4', '', 'w-[40px]'], ['t5', '', 'w-[38px]'], '#',
       ['size', 'Size', 'w-[86px]', 'c'], ['location', 'Location', 'w-[122px]', 'c'], ['convert', 'Convert', 'w-[120px]', 'c'], ['misc', 'Miscellaneous', 'w-[173px]', 'c'], ['prefs', 'Tolerances', 'w-[140px]'], '#',
       ['clip', 'Clipboard', 'w-[137px]', 'c'], ['', '[ Empty ]', 'w-[90px]']],
      [['explode', '', 'w-[41px]'], ['reset', 'Reset', 'w-[93px]'], 'explodeFactor', '#',
       ['edgecol', 'Edge Coloring', 'w-[176px]', 'c'], ['e0', '', 'w-[45px]', 'cd'], ['e1', '', 'w-[45px]', 'cd'], ['e2', '', 'w-[45px]', 'cd'], ['e3', '', 'w-[45px]', 'cd'], ['ex', '', 'w-[45px]', 'cd'],
       ['arrow', '', 'w-[38px]'], ['gap', '', 'w-[42px]'], ['thick', 'Thicken', 'w-[100px]']],
      [['', 'Solution', 'w-[82px]'], ['rd', 'Deformation', 'w-[160px]', 'c'], ['re', 'Strain', 'w-[101px]', 'c'], ['rs', 'Stress', 'w-[103px]', 'c'], ['rE', 'Energy', 'w-[110px]', 'c'], '|',
       ['rD', 'Damage', 'w-[121px]', 'c'], '|', ['rs', 'Linearized Stress', 'w-[195px]', 'c'], '|', ['volume', 'Volume', 'w-[108px]'], '|', ['probe', 'Probe', 'w-[102px]', 'c'], ['tools', 'Tools', 'w-[97px]', 'c'], '|',
       ['user', 'User Defined Result', 'w-[217px]'], '|', ['campbell', 'Campbell Diagram', 'w-[206px]', 'd'], '|', ['rt', 'Coordinate Systems', 'w-[225px]', 'c'], ['last', '', 'w-[30px]']]
    ];
    const grip = '<span class="w-[16px] shrink-0"><span class="block w-[3px] h-7 border-r-2 border-b border-[#b0b0b0]"></span></span>';
    const special = {
      scale: `<div class="relative w-[221px] mr-[9px] shrink-0 text-[#8b8b8b]"><select aria-label="Vertex scale" disabled class="appearance-none w-full h-7 pl-[5px] bg-[#f6f6f6] text-[16px]"><option>1.3e-004 (Auto Scale)</option></select><span class="absolute right-[8px] top-[11px] flex pointer-events-none"><svg class="w-[10px] h-[6px]" viewBox="0 0 10 6"><path d="M0 0h10L5 6z" fill="#999"/></svg></span></div>`,
      explodeFactor: `<label for="explode" class="w-[145px] shrink-0 pb-1 text-[17px]">Explode Factor:</label>
        <div class="w-[205px] mr-[18px] shrink-0 relative h-5"><input id="explode" type="range" min="0" max="100" value="0" class="absolute inset-0 w-full opacity-0"/><span class="block mt-[4px] h-[3px] bg-[#808080]"></span><span class="absolute left-0 top-0 w-[7px] h-[15px] bg-[#f4f4f4] border-r-2 border-b-2 border-[#888]"></span></div>
        <div class="relative w-[202px] mr-[8px] shrink-0"><select aria-label="Explode center" class="appearance-none w-full h-7 pl-[3px] pt-1 leading-6 bg-white text-[17px]"><option>Assembly Center</option></select><span class="absolute right-0 top-0 w-5 h-7 bg-[#efefef] flex items-center justify-center pointer-events-none"><svg class="w-3 h-[7px]" viewBox="0 0 12 7"><path d="M0 0h12L6 7z"/></svg></span></div>`
    };

    function tool(t) {
      if (t === '|') return '<span class="w-[15px] h-7 shrink-0 border-l-2 border-[#b4b4b4]"></span>';
      if (t === '#') return '<span class="self-stretch w-[8px] -mt-[2px] shrink-0 border-l-2 border-[#a8a8a8] bg-[#f6f6f6]"></span>' + grip;
      if (typeof t === 'string') return special[t];
      const [icon, label, w, f = ''] = t;
      const off = f.includes('d');
      let cls = 'h-[34px] shrink-0 flex items-center whitespace-nowrap ' + w;
      if (off) cls += ' text-[#a3a3a3]';
      if (f.includes('p')) cls += ' -ml-[8px] pl-[6px] mr-[8px] bg-[#f8f8f8] border-t-2 border-l-2 border-[#b0b0b0]';
      const aria = label ? '' : ` aria-label="${icon}"`;
      const pic = icon ? svg(icon) : '';
      const text = label ? `<span class="${icon ? 'ml-[3px]' : ''}">${label}</span>` : '';
      const drop = f.includes('c') ? `<span class="ml-auto">${caret(off ? '#a3a3a3' : '#000')}</span>` : '';
      const gap = f.includes('c') ? ' mr-3' : '';
      return `<button class="${cls}${gap}"${aria}${off ? ' disabled' : ''}>${pic}${text}${drop}</button>`;
    }

    document.getElementById('toolbars').innerHTML = bars.map((bar) =>
      `<div class="h-9 pl-[5px] pt-[2px] flex items-center border-b-2 border-[#b2b2b2]">${grip.replace('w-[16px]', bar === bars[3] ? 'w-[9px]' : 'w-[16px]')}${bar.map(tool).join('')}</div>`).join('');

    document.getElementById('outlineTools').innerHTML =
      '<span class="ml-[5px] w-[2px] h-7 mr-[13px] border-r-2 border-[#b0b0b0]"></span>' +
      ['refresh', 'eraser', 'invert', 'expand', 'hide', 'sort'].map((n) => `<button aria-label="${n}" class="w-9 flex">${svg(n)}</button>`).join('');

    document.querySelectorAll('[data-icon]').forEach((el) => {
      el.innerHTML = svg(el.dataset.icon, el.dataset.icon === 'pin' ? 'w-[16px] h-[16px]' : 'w-[25px] h-[25px]');
    });

    // ---- outline tree: [guide cells, status, icon, label, bold] ----
    // guides: | line, t tee, L corner, m/M collapse (M has siblings below), P expand
    const nodes = [
      ['', '', 'project', 'Project', 1],
      ['m', '', 'model', 'Model (D4)', 1],
      [' M', 'v', 'geometry', 'Geometry'],
      [' |L', 'x', 'part', 'demo-FreeParts'],
      [' M', 'v', 'materials', 'Materials'],
      [' |L', 'v', 'steel', 'Structural Steel'],
      [' P', 'v', 'axes', 'Coordinate Systems'],
      [' t', 'v', 'meshnode', 'Mesh'],
      [' m', 'y', 'statics', 'Static Structural (D5)', 1],
      ['  t', 'v', 'settings', 'Analysis Settings'],
      ['  t', 'v', 'force', 'Force'],
      ['  t', 'v', 'fixed', 'Fixed Support'],
      ['  m', 'r', 'solution', 'Solution (D6)', 2],
      ['   L', 'r', 'solinfo', 'Solution Information']
    ];
    const status = {
      '': '',
      v: '<path d="M2 17l3 5 9-12" fill="none" stroke="#0a8a0a" stroke-width="2.500"/>',
      x: '<path d="M2 17l3 5 7-10M6 12l7 10" fill="none" stroke="#0a8a0a" stroke-width="2.200"/>',
      y: '<path d="M7 6h6l-4 7h4L2 23l3-8H2z" fill="#ffd800" stroke="#a08000"/>',
      r: '<path d="M7 6h6l-4 7h4L2 23l3-8H2z" fill="#f01010" stroke="#a00"/>'
    };
    function guide(c) {
      let d = '';
      if (c === '|' || c === 't' || c === 'M' || c === 'P') d += 'M20.500 0v24';
      if (c === 'L' || c === 'm') d += 'M20.500 0v12';
      if (c !== ' ' && c !== '|') d += 'M20 12.500h20';
      const boxed = 'mMP'.includes(c);
      const sign = boxed ? `<path d="M14.500 6.500h12v12h-12z" fill="#fff" stroke="#777"/><path d="M17 12.500h7${c === 'P' ? 'M20.500 9v7' : ''}" stroke="#000" stroke-width="1.500"/>` : '';
      const art = `<svg class="w-10 h-6 block" viewBox="0 0 40 24"><path d="${d}" fill="none" stroke="#888" stroke-dasharray="1 2"/>${sign}</svg>`;
      return boxed ? `<button class="w-10 shrink-0" aria-label="Toggle">${art}</button>` : `<span class="w-10 shrink-0">${art}</span>`;
    }
    document.getElementById('tree').innerHTML = nodes.map(([g, s, icon, label, bold]) =>
      `<li class="h-6 flex items-center whitespace-nowrap">${[...g].map(guide).join('')}<svg class="w-[14px] h-6 shrink-0" viewBox="0 0 14 24">${status[s]}</svg>${svg(icon)}<span class="ml-1 px-[3px] ${bold ? 'font-bold text-[17px] text-black' : ''} ${bold === 2 ? 'bg-[#efefef]' : ''}">${label}</span></li>`).join('');

    // ---- details table ----
    const details = [
      ['Adaptive Mesh Refinement'], ['Max Refinement Loops', '1.'], ['Refinement Depth', '2.'],
      ['Information'], ['Status', 'Solve Required', 1], ['MAPDL Elapsed Time', '', 1], ['MAPDL Memory Used', '', 1], ['MAPDL Result File Size', '', 1],
      ['Post Processing'], ['Beam Section Results', 'No'], ['On Demand Stress/Strain', 'No']
    ];
    document.getElementById('details').innerHTML = details.map(([k, v, ro]) => v === undefined
      ? `<tr class="h-[27px]"><td><button aria-label="Collapse ${k}" class="flex pl-1"><svg class="w-[13px] h-[13px]" viewBox="0 0 13 13"><path d="M.500.500h12v12H.500z" fill="#fff" stroke="#888"/><path d="M3 6.500h7" stroke="#000" stroke-width="1.500"/></svg></button></td><th colspan="2" class="border border-[#a0a0a0] pl-[5px] text-left font-semibold text-black">${k}</th></tr>`
      : `<tr class="h-[27px]"><td></td><td class="border border-[#a0a0a0] pl-[5px] whitespace-nowrap">${k}</td><td class="border border-[#a0a0a0] pl-[5px] ${ro ? 'bg-[#e6e5e1]' : ''}">${v}</td></tr>`).join('');
  </script>
</body>
</html>
